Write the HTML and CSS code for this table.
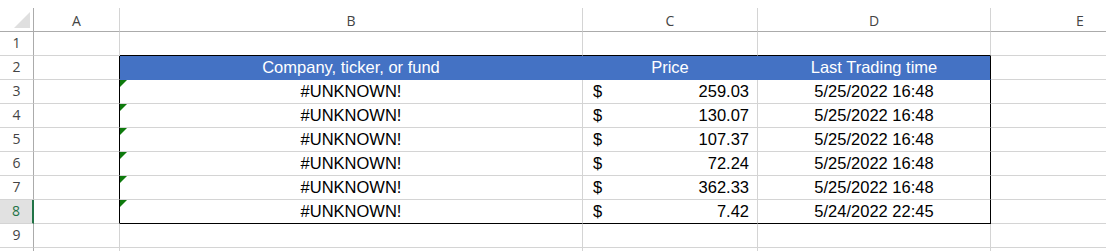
FILE: index.html
```html
<!DOCTYPE html>
<html lang="en">
<head>
<meta charset="utf-8">
<title>Sheet</title>
<link rel="stylesheet" href="styles.css">
</head>
<body>
<div class="sheet">
  <div class="corner"><svg width="16" height="16" viewBox="0 0 16 16"><polygon points="16,0 16,16 0,16" fill="#dfdfdf"/></svg></div>
  <div class="ch">A</div><div class="ch">B</div><div class="ch">C</div><div class="ch">D</div><div class="ch e">E</div>

  <div class="rh">1</div><div class="c"></div><div class="c top-edge"></div><div class="c top-edge"></div><div class="c top-edge"></div><div class="c e"></div>

  <div class="rh">2</div><div class="c left-edge"></div><div class="c hd">Company, ticker, or fund</div><div class="c hd">Price</div><div class="c hd right-edge">Last Trading time</div><div class="c e"></div>

  <div class="rh">3</div><div class="c left-edge"></div><div class="c name err">#UNKNOWN!</div><div class="c price"><span>$</span><span>259.03</span></div><div class="c date right-edge">5/25/2022 16:48</div><div class="c e"></div>

  <div class="rh">4</div><div class="c left-edge"></div><div class="c name err">#UNKNOWN!</div><div class="c price"><span>$</span><span>130.07</span></div><div class="c date right-edge">5/25/2022 16:48</div><div class="c e"></div>

  <div class="rh">5</div><div class="c left-edge"></div><div class="c name err">#UNKNOWN!</div><div class="c price"><span>$</span><span>107.37</span></div><div class="c date right-edge">5/25/2022 16:48</div><div class="c e"></div>

  <div class="rh">6</div><div class="c left-edge"></div><div class="c name err">#UNKNOWN!</div><div class="c price"><span>$</span><span>72.24</span></div><div class="c date right-edge">5/25/2022 16:48</div><div class="c e"></div>

  <div class="rh">7</div><div class="c left-edge"></div><div class="c name err">#UNKNOWN!</div><div class="c price"><span>$</span><span>362.33</span></div><div class="c date right-edge">5/25/2022 16:48</div><div class="c e"></div>

  <div class="rh sel">8</div><div class="c left-edge"></div><div class="c name err bottom-edge">#UNKNOWN!</div><div class="c price bottom-edge"><span>$</span><span>7.42</span></div><div class="c date right-edge bottom-edge">5/24/2022 22:45</div><div class="c e"></div>

  <div class="rh">9</div><div class="c"></div><div class="c"></div><div class="c"></div><div class="c"></div><div class="c e"></div>

  <div class="rh"></div><div class="c"></div><div class="c"></div><div class="c"></div><div class="c"></div><div class="c e"></div>
</div>
</body>
</html>
```
FILE: styles.css
```css
html, body {
  margin: 0;
  padding: 0;
  background: #ffffff;
  overflow: hidden;
}

.sheet {
  display: grid;
  grid-template-columns: 34px 86px 463px 175px 233px 178px;
  grid-auto-rows: 24px;
  width: 1106px;
  overflow: hidden;
  margin-top: 8px;
  font-family: "Liberation Sans", Arial, sans-serif;
  font-size: 16.5px;
  color: #000;
}

.sheet > div {
  box-sizing: border-box;
  min-width: 0;
  white-space: nowrap;
  overflow: hidden;
}

.corner {
  border-right: 1px solid #ababab;
  border-bottom: 1px solid #ababab;
  display: flex;
  justify-content: flex-end;
  align-items: flex-end;
  padding: 0 3px 3px 0;
}

.corner svg {
  display: block;
}

.ch {
  border-right: 1px solid #d4d4d4;
  border-bottom: 1px solid #ababab;
  font-family: "Open Sans", "Noto Sans", sans-serif;
  font-size: 14px;
  color: #444444;
  text-align: center;
  line-height: 21px;
  padding-top: 2px;
}

.rh {
  border-right: 1px solid #ababab;
  border-bottom: 1px solid #d4d4d4;
  font-family: "Open Sans", "Noto Sans", sans-serif;
  font-size: 14px;
  color: #444444;
  text-align: center;
  line-height: 22px;
}

.rh.sel {
  background: #e1e1e1;
  color: #217346;
  border-right: 2px solid #217346;
}

.c {
  border-right: 1px solid #d4d4d4;
  border-bottom: 1px solid #d4d4d4;
  line-height: 23px;
  position: relative;
}

.e {
  border-right: none;
}

.top-edge {
  border-bottom-color: #000;
}

.left-edge {
  border-right-color: #000;
}

.right-edge {
  border-right-color: #000;
}

.bottom-edge {
  border-bottom-color: #000;
}

.hd {
  background: #4472c4;
  color: #ffffff;
  text-align: center;
  border-bottom-color: #4472c4;
}

.hd:not(.right-edge) {
  border-right-color: #4472c4;
}

.name,
.date {
  text-align: center;
}

.price {
  display: flex;
  justify-content: space-between;
  padding: 0 8px 0 10px;
}

.err::before {
  content: "";
  position: absolute;
  top: 0;
  left: 0;
  width: 7px;
  height: 7px;
  background: #0e7a0d;
  clip-path: polygon(0 0, 100% 0, 0 100%);
}
```
